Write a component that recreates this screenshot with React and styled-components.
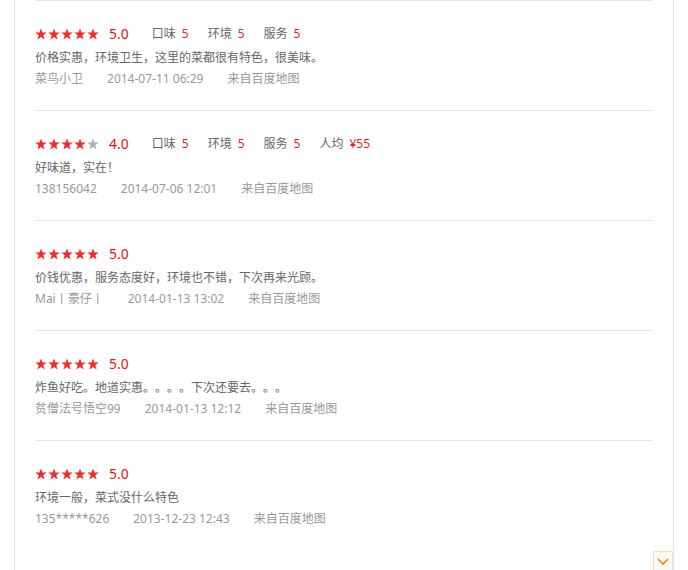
import React from "react";
import styled, { createGlobalStyle } from "styled-components";

const Global = createGlobalStyle`
  html, body { margin: 0; padding: 0; background: #fff; }
  body { font-family: "Noto Sans", "Noto Sans CJK SC", sans-serif; font-size: 12px; }
`;

const Page = styled.div`
  position: relative;
  width: 660px;
  height: 570px;
  margin-left: 14px;
  border-left: 1px solid #e6e6e6;
  border-right: 1px solid #e6e6e6;
  padding: 0 20px;
  box-sizing: border-box;
  overflow: hidden;
`;

const List = styled.ul`
  list-style: none;
  margin: 0;
  padding: 0;
`;

const Item = styled.li`
  height: 110px;
  box-sizing: border-box;
  padding-top: 23px;
  border-top: 1px solid #e6e6e6;
`;

const RatingRow = styled.div`
  display: flex;
  align-items: center;
  height: 20px;
`;

const Stars = styled.div`
  display: flex;
  gap: 1px;
  margin-right: 10px;
`;

const Score = styled.span`
  font-size: 14px;
  color: #f20f0f;
  margin-right: 23px;
  line-height: 20px;
`;

const Sub = styled.span`
  color: #666;
  margin-right: 19px;
  line-height: 20px;
  b {
    font-weight: normal;
    color: #f21b1b;
    margin-left: 6px;
  }
`;

const Comment = styled.p`
  margin: 2px 0 0;
  color: #666;
  line-height: 22px;
  font-family: "Noto Sans CJK SC", sans-serif;
  text-spacing-trim: space-all;
`;

const Meta = styled.div`
  display: flex;
  gap: 24px;
  color: #999;
  line-height: 22px;
`;

const MoreBtn = styled.button`
  position: absolute;
  right: 0;
  top: 551px;
  width: 20px;
  height: 22px;
  padding: 0;
  border: 1px solid #f6dcc9;
  background: #fff9f4;
  display: flex;
  justify-content: center;
  padding-top: 6px;
  box-sizing: border-box;
`;

const Star = ({ on }) => (
  <svg width="12" height="12" viewBox="0 0 24 24">
    <polygon
      points="12,1 15,9.2 23.5,9.2 16.6,14.5 19.2,23 12,17.8 4.8,23 7.4,14.5 0.5,9.2 9,9.2"
      fill={on ? "#f22b2b" : "#b0b0b0"}
    />
  </svg>
);

const data = [
  { stars: 5, score: "5.0", subs: [["口味", "5"], ["环境", "5"], ["服务", "5"]], text: "价格实惠，环境卫生，这里的菜都很有特色，很美味。", user: "菜鸟小卫", date: "2014-07-11 06:29" },
  { stars: 4, score: "4.0", subs: [["口味", "5"], ["环境", "5"], ["服务", "5"], ["人均", "¥55"]], text: "好味道，实在！", user: "138156042", date: "2014-07-06 12:01" },
  { stars: 5, score: "5.0", subs: [], text: "价钱优惠，服务态度好，环境也不错，下次再来光顾。", user: "Mai丨豪仔丨", date: "2014-01-13 13:02" },
  { stars: 5, score: "5.0", subs: [], text: "炸鱼好吃。地道实惠。。。。下次还要去。。。", user: "贫僧法号悟空99", date: "2014-01-13 12:12" },
  { stars: 5, score: "5.0", subs: [], text: "环境一般，菜式没什么特色", user: "135*****626", date: "2013-12-23 12:43" },
];

export default function App() {
  return (
    <>
      <Global />
      <Page>
        <List>
          {data.map((d, i) => (
            <Item key={i}>
              <RatingRow>
                <Stars>
                  {[0, 1, 2, 3, 4].map((k) => (
                    <Star key={k} on={k < d.stars} />
                  ))}
                </Stars>
                <Score>{d.score}</Score>
                {d.subs.map(([l, v]) => (
                  <Sub key={l}>
                    {l}
                    <b>{v}</b>
                  </Sub>
                ))}
              </RatingRow>
              <Comment>{d.text}</Comment>
              <Meta>
                <span>{d.user}</span>
                <span>{d.date}</span>
                <span>来自百度地图</span>
              </Meta>
            </Item>
          ))}
        </List>
        <MoreBtn aria-label="more">
          <svg width="12" height="7" viewBox="0 0 12 7">
            <polyline points="1,1 6,6 11,1" fill="none" stroke="#ff6a00" strokeWidth="1.3" />
          </svg>
        </MoreBtn>
      </Page>
    </>
  );
}
